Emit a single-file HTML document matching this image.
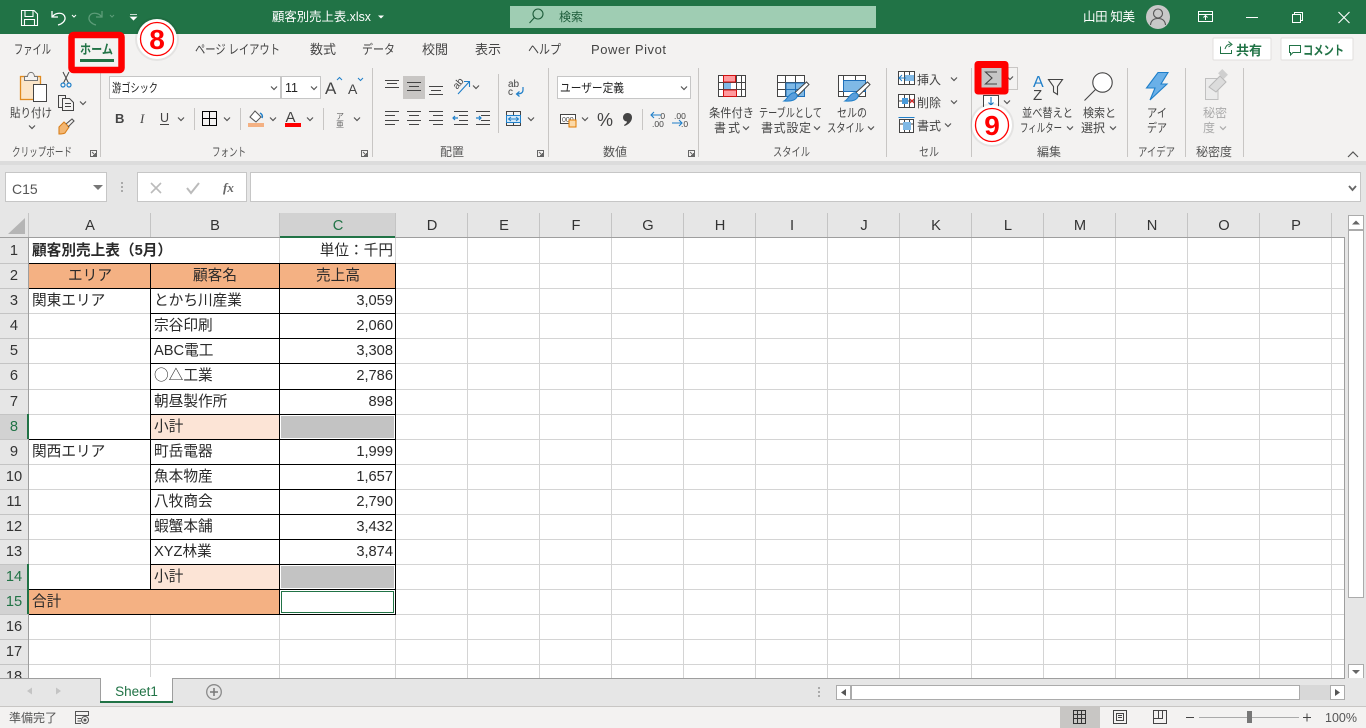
<!DOCTYPE html>
<html lang="ja">
<head>
<meta charset="utf-8">
<title>顧客別売上表.xlsx - Excel</title>
<style>
html,body{margin:0;padding:0;width:1366px;height:728px;overflow:hidden;background:#fff}
svg{display:block;font-family:"Liberation Sans","Noto Sans CJK JP",sans-serif}
.rb{font-size:12px;fill:#444}
.tab{font-size:13px;fill:#444}
.lb{font-size:12px;fill:#555}
.c{font-size:14.67px;fill:#2a2a2a}
.h{font-size:14.67px;fill:#333;text-anchor:middle}
.m{text-anchor:middle}
.e{text-anchor:end}
.ln{fill:none;stroke:#444;stroke-width:1;shape-rendering:crispEdges}
.ic{fill:none;stroke:#444;stroke-width:1}
.chev{fill:none;stroke:#555;stroke-width:1.2}
</style>
</head>
<body>
<svg width="1366" height="728" viewBox="0 0 1366 728" xmlns="http://www.w3.org/2000/svg">
<defs>
<path id="cv" class="chev" d="M-3 -1.5L0 1.5L3 -1.5"/>
<path id="dl" d="M0.5 0.5H6.5V6.5H0.5ZM2 2L5.5 5.5M5.5 3V5.5H3" fill="none" stroke="#666" stroke-width="1"/>
</defs>

<!-- title bar -->
<rect width="1366" height="34" fill="#217346"/>
<path d="M21.5 10.5H34L37.5 14V25.5H21.5ZM25 10.5V16.5H33V10.5M24.5 25.5V19.5H34.5V25.5" fill="none" stroke="#fff" stroke-width="1.1"/>
<path d="M52 11V17H58M52.5 16.5C56 12 64 12 65 17.5C65.6 21 62 24 58 25" fill="none" stroke="#fff" stroke-width="1.3"/>
<path d="M72 15L74 17L76 15" fill="none" stroke="#fff" stroke-width="1"/>
<path d="M102 11V17H96M101.500 16.500C98 12 90 12 89 17.500C88.400 21 92 24 96 25" fill="none" stroke="#5c9c78" stroke-width="1.300"/>
<path d="M110 15L112 17L114 15" fill="none" stroke="#5c9c78" stroke-width="1"/>
<path d="M130 14.500H137M130.500 17L133.500 20L136.500 17Z" fill="#fff" stroke="#fff" stroke-width="0.800"/>
<text x="272" y="21" font-size="12.500" fill="#fff" textLength="99" lengthAdjust="spacingAndGlyphs">顧客別売上表.xlsx</text>
<path d="M378 15.500H384L381 18.500Z" fill="#fff"/>
<rect x="510" y="6" width="366" height="22" fill="#9fcdb3"/>
<circle cx="538" cy="14" r="5" fill="none" stroke="#1d5c3a" stroke-width="1.100"/>
<path d="M534.500 17.500L529.500 23" stroke="#1d5c3a" stroke-width="1.100" fill="none"/>
<text x="559" y="21" font-size="12" fill="#1d5c3a">検索</text>
<text x="1083" y="21" font-size="12.500" fill="#fff" textLength="52">山田 知美</text>
<circle cx="1158" cy="17" r="12" fill="#c8c8c8"/>
<circle cx="1158" cy="13.500" r="4.500" fill="none" stroke="#555" stroke-width="1.100"/>
<path d="M1150.500 25C1151 20 1154 18.500 1158 18.500C1162 18.500 1165 20 1165.500 25" fill="none" stroke="#555" stroke-width="1.100"/>
<path d="M1198.500 11.500H1212.500V21.500H1198.500ZM1198.500 14.500H1212.500M1205.500 20V16M1203.500 17.500L1205.500 15.500L1207.500 17.500" fill="none" stroke="#fff" stroke-width="1"/>
<rect x="1246" y="17" width="12" height="1" fill="#fff"/>
<path d="M1292.500 14.500H1300.500V22.500H1292.500ZM1294.500 14.500V12.500H1302.500V20.500H1300.500" fill="none" stroke="#fff" stroke-width="1"/>
<path d="M1338.500 12L1349.500 23M1349.500 12L1338.500 23" fill="none" stroke="#fff" stroke-width="1.100"/>

<!-- ribbon -->
<rect y="34" width="1366" height="127" fill="#f3f2f1"/>
<rect y="161" width="1366" height="4" fill="#dcdcdc"/>
<rect y="165" width="1366" height="48" fill="#e6e6e6"/>

<!-- tabs -->
<text class="tab" x="14" y="54" textLength="37" lengthAdjust="spacingAndGlyphs">ファイル</text>
<text class="tab" x="195" y="54" textLength="85" lengthAdjust="spacingAndGlyphs">ページ レイアウト</text>
<text class="tab" x="310" y="54">数式</text>
<text class="tab" x="362" y="54" textLength="33" lengthAdjust="spacingAndGlyphs">データ</text>
<text class="tab" x="422" y="54">校閲</text>
<text class="tab" x="475" y="54">表示</text>
<text class="tab" x="528" y="54" textLength="33" lengthAdjust="spacingAndGlyphs">ヘルプ</text>
<text class="tab" x="591" y="54" textLength="75">Power Pivot</text>

<!-- share / comment -->
<rect x="1213" y="38" width="58" height="22" rx="1" fill="#fff" stroke="#e1dfdd"/>
<path d="M1220.500 46.500V53.500H1231.500V50M1225 49C1226 45.500 1228 44 1231 44M1228.500 41.500L1232 44.500L1228.500 47" fill="none" stroke="#217346" stroke-width="1"/>
<text x="1236" y="55" font-size="13" font-weight="700" fill="#217346">共有</text>
<rect x="1281" y="38" width="72" height="22" rx="1" fill="#fff" stroke="#e1dfdd"/>
<path d="M1289.500 45.500H1300.500V52.500H1293L1290.500 55V52.500H1289.500Z" fill="none" stroke="#217346" stroke-width="1"/>
<text x="1303" y="55" font-size="13" font-weight="700" fill="#217346" textLength="41" lengthAdjust="spacingAndGlyphs">コメント</text>

<!-- group separators -->
<g fill="#c8c6c4">
<rect x="100" y="68" width="1" height="89"/><rect x="372" y="68" width="1" height="89"/><rect x="548" y="68" width="1" height="89"/><rect x="698" y="68" width="1" height="89"/><rect x="886" y="68" width="1" height="89"/><rect x="971" y="68" width="1" height="89"/><rect x="1127" y="68" width="1" height="89"/><rect x="1185" y="68" width="1" height="89"/><rect x="1243" y="68" width="1" height="89"/>
<rect x="194" y="108" width="1" height="22"/><rect x="240" y="108" width="1" height="22"/><rect x="323" y="108" width="1" height="22"/><rect x="498" y="74" width="1" height="59"/><rect x="642" y="109" width="1" height="21"/>
</g>

<!-- group labels -->
<text class="lb" x="12" y="156" textLength="60" lengthAdjust="spacingAndGlyphs">クリップボード</text>
<text class="lb" x="212" y="156" textLength="34" lengthAdjust="spacingAndGlyphs">フォント</text>
<text class="lb" x="440" y="156">配置</text>
<text class="lb" x="603" y="156">数値</text>
<text class="lb" x="773" y="156" textLength="37" lengthAdjust="spacingAndGlyphs">スタイル</text>
<text class="lb" x="919" y="156" textLength="20" lengthAdjust="spacingAndGlyphs">セル</text>
<text class="lb" x="1037" y="156">編集</text>
<text class="lb" x="1138" y="156" textLength="37" lengthAdjust="spacingAndGlyphs">アイデア</text>
<text class="lb" x="1196" y="156">秘密度</text>
<use href="#dl" x="90" y="150"/><use href="#dl" x="361" y="150"/><use href="#dl" x="537" y="150"/><use href="#dl" x="688" y="150"/>
<path class="chev" d="M1348 157L1353 152L1358 157"/>

<!-- clipboard -->
<rect x="20.500" y="76.500" width="20" height="23" fill="#fbe5c8" stroke="#e08a1e" stroke-width="1.300"/>
<path d="M24.500 80.500V76.500H27.500C28 71 34 71 34.500 76.500H37.500V80.500Z" fill="#f3f2f1" stroke="#777" stroke-width="1"/>
<rect x="33.500" y="84.500" width="13" height="17" fill="#fff" stroke="#444"/>
<text class="rb" x="10" y="117" textLength="42" lengthAdjust="spacingAndGlyphs">貼り付け</text>
<use href="#cv" x="32" y="127"/>
<path d="M63 72L68.500 83M69 72L63.500 83" stroke="#444" fill="none"/>
<circle cx="63" cy="85" r="2" fill="none" stroke="#1f7fc9" stroke-width="1.200"/><circle cx="69" cy="85" r="2" fill="none" stroke="#1f7fc9" stroke-width="1.200"/>
<path d="M62.500 107.500H58.500V95.500H65.500V98.500M62.500 98.500H69.500L73.500 102.500V110.500H62.500ZM65 103.500H71M65 106.500H71" fill="none" stroke="#444"/>
<use href="#cv" x="83" y="103"/>
<path d="M59 127L64 122L69 127L65 133C63 134 61 134 59 134Z" fill="#f3b671" stroke="#d9801c" stroke-width="1.100"/>
<path d="M66 124L72 119L74 121L68 127" fill="none" stroke="#555" stroke-width="1.100"/>

<!-- font -->
<rect x="109.500" y="76.500" width="171" height="22" fill="#fff" stroke="#c6c6c6"/>
<text x="112" y="92" font-size="12" fill="#222" textLength="46" lengthAdjust="spacingAndGlyphs">游ゴシック</text>
<use href="#cv" x="274" y="88"/>
<rect x="281.500" y="76.500" width="39" height="22" fill="#fff" stroke="#c6c6c6"/>
<text x="285" y="92" font-size="12.500" fill="#222">11</text>
<use href="#cv" x="314" y="88"/>
<text x="325" y="94" font-size="17" fill="#444">A</text><path d="M337 80L339.500 77.500L342 80" fill="none" stroke="#1f7fc9"/>
<text x="348" y="94" font-size="14" fill="#444">A</text><path d="M358 78L360.500 80.500L363 78" fill="none" stroke="#1f7fc9"/>
<text x="115" y="123" font-size="13" font-weight="700" fill="#444">B</text>
<text x="140" y="123" font-size="13" font-style="italic" fill="#444" font-family="Liberation Serif">I</text>
<text x="160" y="122" font-size="12.500" fill="#444">U</text><rect x="160" y="124" width="9" height="1" fill="#444"/>
<use href="#cv" x="181" y="119"/>
<path d="M202.500 111.500H216.500V125.500H202.500ZM209.500 111.500V125.500M202.500 118.500H216.500" fill="none" stroke="#000" stroke-width="1" shape-rendering="crispEdges"/>
<use href="#cv" x="227" y="119"/>
<path d="M250 117L255 111L261 117L256 122Z" fill="#fff" stroke="#555"/><path d="M260 113C262 114 263 116 262 118" fill="none" stroke="#1f7fc9" stroke-width="1.500"/>
<rect x="248" y="123" width="16" height="4" fill="#f4b183"/>
<use href="#cv" x="273" y="119"/>
<text x="285.500" y="122" font-size="15" fill="#444">A</text>
<rect x="285" y="123" width="16" height="4" fill="#f00"/>
<use href="#cv" x="310" y="119"/>
<text x="336" y="119" font-size="8" fill="#666">ア</text><text x="336" y="127" font-size="8" fill="#666">亜</text>
<use href="#cv" x="357" y="119"/>

<!-- alignment -->
<rect x="403" y="76" width="22" height="23" fill="#c8c6c4"/>
<path class="ln" d="M385 80.500H399M387 83.500H397M385 87.500H399M407 82.500H421M409 86.500H419M407 90.500H421M429 86.500H443M431 90.500H441M429 94.500H443"/>
<path class="ln" d="M385 111.500H399M385 115.500H395M385 120.500H399M385 124.500H395M407 111.500H421M409 115.500H419M407 120.500H421M409 124.500H419M429 111.500H443M433 115.500H443M429 120.500H443M433 124.500H443M459 115.500H468M459 120.500H468M454 124.500H468M454 111.500H468M476 111.500H490M481 115.500H490M481 120.500H490M476 124.500H490"/>
<path d="M453 118H458M455 116L453 118L455 120M476 118H481M479 116L481 118L479 120" fill="none" stroke="#1f7fc9" stroke-width="1.200"/>
<text x="453" y="87" font-size="10" fill="#444" transform="rotate(-50 458 84)">ab</text>
<path d="M458 94L469 82M464 81.500H469.500V87" fill="none" stroke="#1f7fc9" stroke-width="1.100"/>
<use href="#cv" x="476" y="87"/>
<text x="508" y="87" font-size="10" fill="#444">ab</text><text x="508" y="95" font-size="10" fill="#444">c</text>
<path d="M523 87V90C523 93 520 94 517 94M519.500 91.500L516.500 94L519.500 96.500" fill="none" stroke="#1f7fc9" stroke-width="1.200"/>
<rect x="506.500" y="115.500" width="14" height="7" fill="#d3e8f8" stroke="#1f7fc9"/>
<path d="M509 119H518M511 117L508.500 119L511 121M516 117L518.500 119L516 121" fill="none" stroke="#1f7fc9"/>
<path d="M506 111.500H521M506 125.500H521M506.500 111.500V115M520.500 111.500V115M506.500 123V125.500M520.500 123V125.500M513.500 111.500V115M513.500 123V125.500" stroke="#444" fill="none" shape-rendering="crispEdges"/>
<use href="#cv" x="531" y="119"/>

<!-- number -->
<rect x="557.500" y="76.500" width="133" height="22" fill="#fff" stroke="#c6c6c6"/>
<text x="560" y="92" font-size="12" fill="#222" textLength="64" lengthAdjust="spacingAndGlyphs">ユーザー定義</text>
<use href="#cv" x="684" y="88"/>
<rect x="560.500" y="114.500" width="15" height="9" fill="#fff" stroke="#444"/>
<text x="562" y="122" font-size="7" fill="#444">000</text>
<rect x="569" y="120" width="7" height="7" fill="#fbd9a8" stroke="#e07b00"/>
<use href="#cv" x="585" y="119"/>
<text x="597" y="126" font-size="18" fill="#444">%</text>
<path d="M627.500 113C630.500 113 632 115 632 117.500C632 121 629 124.500 624.500 126L624 125C626 124 627 122.500 627 121.500C624.500 121.500 623 119.500 623 117.500C623 115 625 113 627.500 113Z" fill="#444"/>
<path d="M651 115H661M654 112L651 115L654 118" fill="none" stroke="#1f7fc9" stroke-width="1.100"/>
<text x="658" y="119" font-size="8.500" fill="#444" font-weight="400">.0</text>
<text x="652" y="127" font-size="8.500" fill="#444">.00</text>
<text x="674" y="119" font-size="8.500" fill="#444">.00</text>
<path d="M672 123H682M679 120L682 123L679 126" fill="none" stroke="#1f7fc9" stroke-width="1.100"/>
<text x="681" y="127" font-size="8.500" fill="#444">.0</text>

<!-- styles: conditional -->
<g shape-rendering="crispEdges">
<rect x="718.500" y="75.500" width="27" height="21" fill="#fff"/>
<path d="M718.500 75.500H745.500V96.500H718.500ZM718.500 82.500H745.500M718.500 89.500H745.500M723.500 75.500V96.500M736.500 75.500V96.500M741.500 75.500V96.500" fill="none" stroke="#444"/>
<rect x="723.500" y="75.500" width="12" height="6.500" fill="#ff9a9e" stroke="#d01010"/>
<rect x="724" y="83" width="7" height="6" fill="#7fb9e6"/>
<rect x="723.500" y="90" width="13" height="6.500" fill="#ff9a9e" stroke="#d01010"/>
</g>
<text class="rb" x="709" y="117" textLength="45" lengthAdjust="spacingAndGlyphs">条件付き</text>
<text class="rb" x="714" y="132" textLength="26">書式</text><use href="#cv" x="746" y="128"/>
<!-- styles: table -->
<g shape-rendering="crispEdges">
<rect x="777.500" y="75.500" width="27" height="21" fill="#fff"/>
<path d="M777.500 75.500H804.500V96.500H777.500ZM777.500 82.500H804.500M777.500 89.500H804.500M785.500 75.500V96.500M795.500 75.500V96.500" fill="none" stroke="#444"/>
<rect x="786" y="83" width="18.500" height="13.500" fill="#7fb9e6" stroke="#1f6fb9"/>
<path d="M795.500 83V96M786 89.500H804" fill="none" stroke="#1f6fb9"/>
</g>
<path d="M806.500 82L809 84.500L798 95.500L795 92.500Z" fill="#fff" stroke="#444"/>
<path d="M792.500 93C795.500 92 798 94.500 797 97C795 101 789 101.500 784 101C787 99.500 788 95 792.500 93Z" fill="#5b9fdc" stroke="#1f7fc9"/>
<text class="rb" x="759" y="117" textLength="63" lengthAdjust="spacingAndGlyphs">テーブルとして</text>
<text class="rb" x="761" y="132" textLength="50">書式設定</text><use href="#cv" x="817" y="128"/>
<!-- styles: cell -->
<g shape-rendering="crispEdges">
<rect x="838.500" y="75.500" width="27" height="21" fill="#fff"/>
<path d="M838.500 75.500H865.500V96.500H838.500ZM843.500 75.500V96.500M855.500 75.500V80M838.500 91.500H865.500" fill="none" stroke="#444"/>
<rect x="843.500" y="80.500" width="22" height="11" fill="#7fb9e6" stroke="#1f6fb9"/>
</g>
<path d="M867.500 82L870 84.500L859 95.500L856 92.500Z" fill="#fff" stroke="#444"/>
<path d="M853.500 93C856.500 92 859 94.500 858 97C856 101 850 101.500 845 101C848 99.500 849 95 853.500 93Z" fill="#5b9fdc" stroke="#1f7fc9"/>
<text class="rb" x="837" y="117" textLength="30" lengthAdjust="spacingAndGlyphs">セルの</text>
<text class="rb" x="827" y="132" textLength="37" lengthAdjust="spacingAndGlyphs">スタイル</text><use href="#cv" x="871" y="128"/>

<!-- cells -->
<g shape-rendering="crispEdges">
<path d="M898.500 71.500H914.500V84.500H898.500ZM898.500 78H914.500M904.500 71.500V84.500M909.500 71.500V84.500" fill="#fff" stroke="#444"/>
<rect x="905" y="75" width="9" height="6" fill="#7fb9e6"/>
<path d="M898.500 94.500H914.500V107.500H898.500ZM898.500 101H914.500M904.500 94.500V107.500M909.500 94.500V107.500" fill="#fff" stroke="#444"/>
<rect x="902" y="98" width="6" height="6" fill="#4a9ad8"/>
<path d="M899.500 119.500H913.500V132.500H899.500ZM899.500 124H913.500M904.500 119.500V132.500M909.500 119.500V132.500" fill="#fff" stroke="#444"/>
<rect x="903" y="122" width="8" height="8" fill="#7fb9e6"/>
<path d="M898.500 117.500H914.500" stroke="#1f7fc9" fill="none"/>
</g>
<path d="M906 78H899M902 75L899 78L902 81" fill="none" stroke="#1f7fc9"/>
<path d="M910 99L914 103M914 99L910 103" stroke="#e02020" fill="none"/>
<text class="rb" x="917" y="84">挿入</text><use href="#cv" x="954" y="79"/>
<text class="rb" x="917" y="107">削除</text><use href="#cv" x="954" y="102"/>
<text class="rb" x="917" y="130">書式</text><use href="#cv" x="948" y="125"/>

<!-- editing -->
<rect x="982.500" y="67.500" width="35" height="22" fill="none" stroke="#c8c6c4"/>
<use href="#cv" x="1010" y="78"/>
<rect x="983.500" y="95.500" width="15" height="15" fill="#fff" stroke="#444"/>
<path d="M991 97V105M988.500 102.500L991 105L993.500 102.500" fill="none" stroke="#1f7fc9" stroke-width="1.200"/>
<use href="#cv" x="1007" y="102"/>
<path d="M978 64.500H1005V91H978Z" fill="#c6c6c6" stroke="#f00" stroke-width="7" stroke-linejoin="round"/>
<path d="M997 72H985.500L992 78L985.500 84H997" fill="none" stroke="#444" stroke-width="1.100"/>
<text x="1033" y="87" font-size="16" fill="#1f7fc9">A</text>
<text x="1033" y="100" font-size="15" fill="#444">Z</text>
<path d="M1048.500 79.500H1062.500L1057.500 86.500V94.500L1053.500 92V86.500Z" fill="none" stroke="#444" stroke-width="1.100"/>
<text class="rb" x="1022" y="117" textLength="51" lengthAdjust="spacingAndGlyphs">並べ替えと</text>
<text class="rb" x="1020" y="132" textLength="42" lengthAdjust="spacingAndGlyphs">フィルター</text><use href="#cv" x="1070" y="128"/>
<circle cx="1102.500" cy="82.500" r="9.700" fill="#fff" stroke="#444" stroke-width="1.100"/>
<path d="M1095.500 89.500L1084.500 100.500" stroke="#444" stroke-width="1.100" fill="none"/>
<text class="rb" x="1083" y="117" textLength="33" lengthAdjust="spacingAndGlyphs">検索と</text>
<text class="rb" x="1081" y="132">選択</text><use href="#cv" x="1113" y="128"/>

<!-- ideas -->
<path d="M1158 72.500H1168L1161 84H1167L1150 100L1155 88H1146.500Z" fill="#6ab0e8" stroke="#1f7fc9" stroke-width="1.100"/>
<text class="rb" x="1147" y="117" textLength="20" lengthAdjust="spacingAndGlyphs">アイ</text>
<text class="rb" x="1147" y="132" textLength="20" lengthAdjust="spacingAndGlyphs">デア</text>

<!-- sensitivity -->
<path d="M1205.500 78.500H1218V99.500H1205.500Z" fill="#ebebeb" stroke="#c0c0c0"/>
<path d="M1209 87L1220 76L1226 82L1216 92Z" fill="#dcdcdc" stroke="#b8b8b8"/>
<rect x="1219" y="71" width="8" height="6" fill="#cfcfcf" transform="rotate(45 1223 74)"/>
<text x="1203" y="117" font-size="12" fill="#aaa">秘密</text>
<text x="1203" y="132" font-size="12" fill="#aaa">度</text>
<path d="M1220 126.500L1223 129.500L1226 126.500" fill="none" stroke="#aaa" stroke-width="1.200"/>

<!-- formula bar -->
<rect x="5.500" y="172.500" width="101" height="29" fill="#fff" stroke="#c6c6c6"/>
<text x="12" y="194" font-size="14" fill="#555">C15</text>
<path d="M93 185H103L98 190Z" fill="#777"/>
<g fill="#aaa"><rect x="121" y="182" width="2" height="2"/><rect x="121" y="186" width="2" height="2"/><rect x="121" y="190" width="2" height="2"/></g>
<rect x="137.500" y="172.500" width="109" height="29" fill="#fff" stroke="#c6c6c6"/>
<path d="M151 183L161 193M161 183L151 193" stroke="#bbb" stroke-width="1.600" fill="none"/>
<path d="M187 188L191 193L199 183" stroke="#bbb" stroke-width="2" fill="none"/>
<text x="223" y="192" font-size="13" font-style="italic" font-weight="700" fill="#666" font-family="Liberation Serif">fx</text>
<rect x="250.500" y="172.500" width="1110" height="29" fill="#fff" stroke="#c6c6c6"/>
<path d="M1349 186L1352.500 190L1356 186" fill="none" stroke="#666" stroke-width="1.800"/>

<!-- sheet area -->
<rect x="0" y="213" width="1345" height="25" fill="#e6e6e6"/>
<rect x="0" y="238" width="29" height="440" fill="#e6e6e6"/>
<rect x="29" y="238" width="1316" height="440" fill="#fff"/>
<rect x="1345" y="213" width="21" height="465" fill="#e6e6e6"/>

<!-- fills -->
<rect x="280" y="213" width="115" height="24" fill="#d2d2d2"/>
<rect x="0" y="415" width="27" height="24" fill="#d2d2d2"/>
<rect x="0" y="565" width="27" height="49" fill="#d2d2d2"/>
<rect x="29" y="264" width="366" height="24" fill="#f4b183"/>
<rect x="29" y="590" width="250" height="24" fill="#f4b183"/>
<rect x="151" y="415" width="128" height="24" fill="#fce4d6"/>
<rect x="151" y="565" width="128" height="24" fill="#fce4d6"/>
<rect x="281" y="416" width="113" height="22" fill="#c3c3c3"/>
<rect x="281" y="566" width="113" height="22" fill="#c3c3c3"/>

<!-- gridlines -->
<g fill="#d4d4d4">
<rect x="29" y="263" width="1316" height="1"/><rect x="29" y="288" width="1316" height="1"/><rect x="29" y="313" width="1316" height="1"/><rect x="29" y="338" width="1316" height="1"/><rect x="29" y="363" width="1316" height="1"/><rect x="29" y="389" width="1316" height="1"/><rect x="29" y="414" width="1316" height="1"/><rect x="29" y="439" width="1316" height="1"/><rect x="29" y="464" width="1316" height="1"/><rect x="29" y="489" width="1316" height="1"/><rect x="29" y="514" width="1316" height="1"/><rect x="29" y="539" width="1316" height="1"/><rect x="29" y="564" width="1316" height="1"/><rect x="29" y="589" width="1316" height="1"/><rect x="29" y="614" width="1316" height="1"/><rect x="29" y="639" width="1316" height="1"/><rect x="29" y="664" width="1316" height="1"/>
<rect x="150" y="614" width="1" height="64"/>
<rect x="279" y="238" width="1" height="440"/>
<rect x="395" y="238" width="1" height="440"/><rect x="467" y="238" width="1" height="440"/><rect x="539" y="238" width="1" height="440"/><rect x="611" y="238" width="1" height="440"/><rect x="683" y="238" width="1" height="440"/><rect x="755" y="238" width="1" height="440"/><rect x="827" y="238" width="1" height="440"/><rect x="899" y="238" width="1" height="440"/><rect x="971" y="238" width="1" height="440"/><rect x="1043" y="238" width="1" height="440"/><rect x="1115" y="238" width="1" height="440"/><rect x="1187" y="238" width="1" height="440"/><rect x="1259" y="238" width="1" height="440"/><rect x="1331" y="238" width="1" height="440"/>
</g>
<!-- row header separators -->
<g fill="#c4c4c4">
<rect x="0" y="263" width="28" height="1"/><rect x="0" y="288" width="28" height="1"/><rect x="0" y="313" width="28" height="1"/><rect x="0" y="338" width="28" height="1"/><rect x="0" y="363" width="28" height="1"/><rect x="0" y="389" width="28" height="1"/><rect x="0" y="414" width="28" height="1"/><rect x="0" y="439" width="28" height="1"/><rect x="0" y="464" width="28" height="1"/><rect x="0" y="489" width="28" height="1"/><rect x="0" y="514" width="28" height="1"/><rect x="0" y="539" width="28" height="1"/><rect x="0" y="564" width="28" height="1"/><rect x="0" y="589" width="28" height="1"/><rect x="0" y="614" width="28" height="1"/><rect x="0" y="639" width="28" height="1"/><rect x="0" y="664" width="28" height="1"/>
<rect x="28" y="213" width="1" height="24"/><rect x="150" y="213" width="1" height="24"/><rect x="279" y="213" width="1" height="24"/><rect x="395" y="213" width="1" height="24"/><rect x="467" y="213" width="1" height="24"/><rect x="539" y="213" width="1" height="24"/><rect x="611" y="213" width="1" height="24"/><rect x="683" y="213" width="1" height="24"/><rect x="755" y="213" width="1" height="24"/><rect x="827" y="213" width="1" height="24"/><rect x="899" y="213" width="1" height="24"/><rect x="971" y="213" width="1" height="24"/><rect x="1043" y="213" width="1" height="24"/><rect x="1115" y="213" width="1" height="24"/><rect x="1187" y="213" width="1" height="24"/><rect x="1259" y="213" width="1" height="24"/><rect x="1331" y="213" width="1" height="24"/>
</g>
<g fill="#9e9e9e">
<rect x="0" y="237" width="1345" height="1"/>
<rect x="28" y="238" width="1" height="440"/>
<rect x="1344" y="237" width="1" height="441"/>
</g>
<path d="M25 218V234H8Z" fill="#b5b5b5"/>
<rect x="280" y="236" width="115" height="2" fill="#217346"/>
<rect x="27" y="414" width="2" height="25" fill="#217346"/>
<rect x="27" y="564" width="2" height="50" fill="#217346"/>

<!-- table borders -->
<g fill="#000">
<rect x="29" y="263" width="367" height="1"/><rect x="29" y="288" width="367" height="1"/>
<rect x="150" y="313" width="246" height="1"/><rect x="150" y="338" width="246" height="1"/><rect x="150" y="363" width="246" height="1"/><rect x="150" y="389" width="246" height="1"/><rect x="150" y="414" width="246" height="1"/>
<rect x="29" y="439" width="367" height="1"/>
<rect x="150" y="464" width="246" height="1"/><rect x="150" y="489" width="246" height="1"/><rect x="150" y="514" width="246" height="1"/><rect x="150" y="539" width="246" height="1"/><rect x="150" y="564" width="246" height="1"/>
<rect x="29" y="589" width="367" height="1"/><rect x="29" y="614" width="367" height="1"/>
<rect x="150" y="263" width="1" height="327"/>
<rect x="279" y="263" width="1" height="352"/>
<rect x="395" y="263" width="1" height="352"/>
</g>
<rect x="281.500" y="591.500" width="112" height="21" fill="#fff" stroke="#217346"/>

<!-- column headers -->
<text class="h" x="90" y="230">A</text><text class="h" x="215" y="230">B</text><text class="h" x="338" y="230" style="fill:#217346">C</text><text class="h" x="432" y="230">D</text><text class="h" x="504" y="230">E</text><text class="h" x="576" y="230">F</text><text class="h" x="648" y="230">G</text><text class="h" x="720" y="230">H</text><text class="h" x="792" y="230">I</text><text class="h" x="864" y="230">J</text><text class="h" x="936" y="230">K</text><text class="h" x="1008" y="230">L</text><text class="h" x="1080" y="230">M</text><text class="h" x="1152" y="230">N</text><text class="h" x="1224" y="230">O</text><text class="h" x="1296" y="230">P</text>

<!-- row headers -->
<text class="h" x="14" y="255">1</text><text class="h" x="14" y="280">2</text><text class="h" x="14" y="305">3</text><text class="h" x="14" y="330">4</text><text class="h" x="14" y="355">5</text><text class="h" x="14" y="380">6</text><text class="h" x="14" y="406">7</text><text class="h" x="14" y="431" style="fill:#217346">8</text><text class="h" x="14" y="456">9</text><text class="h" x="14" y="481">10</text><text class="h" x="14" y="506">11</text><text class="h" x="14" y="531">12</text><text class="h" x="14" y="556">13</text><text class="h" x="14" y="581" style="fill:#217346">14</text><text class="h" x="14" y="606" style="fill:#217346">15</text><text class="h" x="14" y="631">16</text><text class="h" x="14" y="656">17</text><text class="h" x="14" y="681">18</text>

<!-- cell text -->
<text class="c" x="32" y="255" font-weight="700">顧客別売上表（5月）</text>
<text class="c e" x="393" y="255">単位：千円</text>
<text class="c m" x="90" y="280">エリア</text><text class="c m" x="215" y="280">顧客名</text><text class="c m" x="338" y="280">売上高</text>
<text class="c" x="32" y="305">関東エリア</text><text class="c" x="154" y="305">とかち川産業</text><text class="c e" x="393" y="305">3,059</text>
<text class="c" x="154" y="330">宗谷印刷</text><text class="c e" x="393" y="330">2,060</text>
<text class="c" x="154" y="355">ABC電工</text><text class="c e" x="393" y="355">3,308</text>
<text class="c" x="154" y="380" style="font-family:'Noto Sans CJK JP',sans-serif">○△工業</text><text class="c e" x="393" y="380">2,786</text>
<text class="c" x="154" y="406">朝昼製作所</text><text class="c e" x="393" y="406">898</text>
<text class="c" x="154" y="431">小計</text>
<text class="c" x="32" y="456">関西エリア</text><text class="c" x="154" y="456">町岳電器</text><text class="c e" x="393" y="456">1,999</text>
<text class="c" x="154" y="481">魚本物産</text><text class="c e" x="393" y="481">1,657</text>
<text class="c" x="154" y="506">八牧商会</text><text class="c e" x="393" y="506">2,790</text>
<text class="c" x="154" y="531">蝦蟹本舗</text><text class="c e" x="393" y="531">3,432</text>
<text class="c" x="154" y="556">XYZ林業</text><text class="c e" x="393" y="556">3,874</text>
<text class="c" x="154" y="581">小計</text>
<text class="c" x="32" y="606">合計</text>

<!-- vertical scrollbar -->
<rect x="1348.500" y="215.500" width="15" height="14" fill="#fff" stroke="#ababab"/>
<path d="M1352 224.500H1360L1356 220.500Z" fill="#666"/>
<rect x="1348.500" y="230.500" width="15" height="367" fill="#fff" stroke="#ababab"/>
<rect x="1348.500" y="664.500" width="15" height="14" fill="#fff" stroke="#ababab"/>
<path d="M1352 670H1360L1356 674Z" fill="#666"/>

<!-- sheet tabs -->
<rect x="0" y="678" width="1366" height="28" fill="#e6e6e6"/>
<rect x="0" y="678" width="1345" height="1" fill="#9e9e9e"/>
<path d="M32 687.500V694.500L27 691ZM56 687.500V694.500L61 691Z" fill="#c4c4c4"/>
<rect x="100.500" y="678.500" width="72" height="24" fill="#fff" stroke="#9e9e9e"/>
<rect x="101" y="677" width="71" height="3" fill="#fff"/>
<rect x="100" y="701" width="73" height="2" fill="#217346"/>
<text x="136.500" y="696" font-size="13.500" fill="#217346" text-anchor="middle">Sheet1</text>
<circle cx="214" cy="692" r="7.300" fill="none" stroke="#8a8a8a" stroke-width="1.300"/>
<path d="M210 692H218M214 688V696" stroke="#777" stroke-width="1.500" fill="none"/>
<g fill="#aaa"><rect x="818" y="687" width="2" height="2"/><rect x="818" y="691" width="2" height="2"/><rect x="818" y="695" width="2" height="2"/></g>
<rect x="1300" y="685" width="31" height="15" fill="#d8d8d8"/>
<rect x="836.500" y="685.500" width="14" height="14" fill="#fff" stroke="#ababab"/>
<path d="M846 689V696L841 692.500Z" fill="#555"/>
<rect x="851.500" y="685.500" width="448" height="14" fill="#fff" stroke="#ababab"/>
<rect x="1330.500" y="685.500" width="14" height="14" fill="#fff" stroke="#ababab"/>
<path d="M1335 689V696L1340 692.500Z" fill="#555"/>

<!-- status bar -->
<rect x="0" y="706" width="1366" height="22" fill="#f3f2f1"/>
<rect x="0" y="706" width="1366" height="1" fill="#c8c6c4"/>
<text x="9" y="722" font-size="12" fill="#555">準備完了</text>
<path d="M75.500 711.500H88.500V715.500H75.500ZM75.500 715.500V723.500H81M77.500 718.500H81M77.500 721H81" fill="none" stroke="#555" stroke-width="1"/>
<circle cx="85" cy="720" r="3.500" fill="none" stroke="#555"/><circle cx="85" cy="720" r="1.500" fill="#555"/>
<rect x="1060" y="707" width="40" height="21" fill="#c8c6c4"/>
<path d="M1073.500 710.500H1085.500V723.500H1073.500ZM1077.500 710.500V723.500M1081.500 710.500V723.500M1073.500 714.500H1085.500M1073.500 718.500H1085.500" fill="none" stroke="#333" shape-rendering="crispEdges"/>
<path d="M1113.500 710.500H1126.500V723.500H1113.500ZM1116.500 713.500H1123.500V720.500H1116.500ZM1118 715.500H1122M1118 717.500H1122" fill="none" stroke="#444" shape-rendering="crispEdges"/>
<path d="M1153.500 710.500H1166.500V723.500H1153.500ZM1153.500 718.500H1162.500V710.500M1158.500 710.500V718.500" fill="none" stroke="#444" shape-rendering="crispEdges"/>
<rect x="1186" y="717" width="8" height="1" fill="#444"/>
<rect x="1199" y="717" width="100" height="1" fill="#aaa"/>
<rect x="1247" y="711" width="5" height="12" fill="#777"/>
<path d="M1303 717.500H1311M1307 713.500V721.500" stroke="#444" fill="none" shape-rendering="crispEdges"/>
<text x="1325" y="722" font-size="12.500" fill="#555">100%</text>

<!-- ホーム tab and callouts -->
<rect x="71.500" y="35" width="50" height="35" rx="2" fill="#f3f2f1" stroke="#f00" stroke-width="6.500" stroke-linejoin="round"/>
<text x="80" y="54" font-size="13" font-weight="700" fill="#217346" textLength="33" lengthAdjust="spacingAndGlyphs">ホーム</text>
<rect x="80" y="59" width="34" height="3" fill="#217346"/>

<circle cx="157" cy="39" r="22" fill="#000" opacity=".06"/>
<circle cx="157" cy="39" r="20" fill="#fff"/>
<circle cx="157" cy="39" r="16.500" fill="none" stroke="#f00" stroke-width="1.300"/>
<text x="157" y="49" font-size="28" font-weight="700" fill="#f00" text-anchor="middle">8</text>

<circle cx="992" cy="125" r="22" fill="#000" opacity=".06"/>
<circle cx="992" cy="125" r="20" fill="#fff"/>
<circle cx="992" cy="125" r="16.500" fill="none" stroke="#f00" stroke-width="1.300"/>
<text x="992" y="135" font-size="28" font-weight="700" fill="#f00" text-anchor="middle">9</text>
</svg>
</body>
</html>
